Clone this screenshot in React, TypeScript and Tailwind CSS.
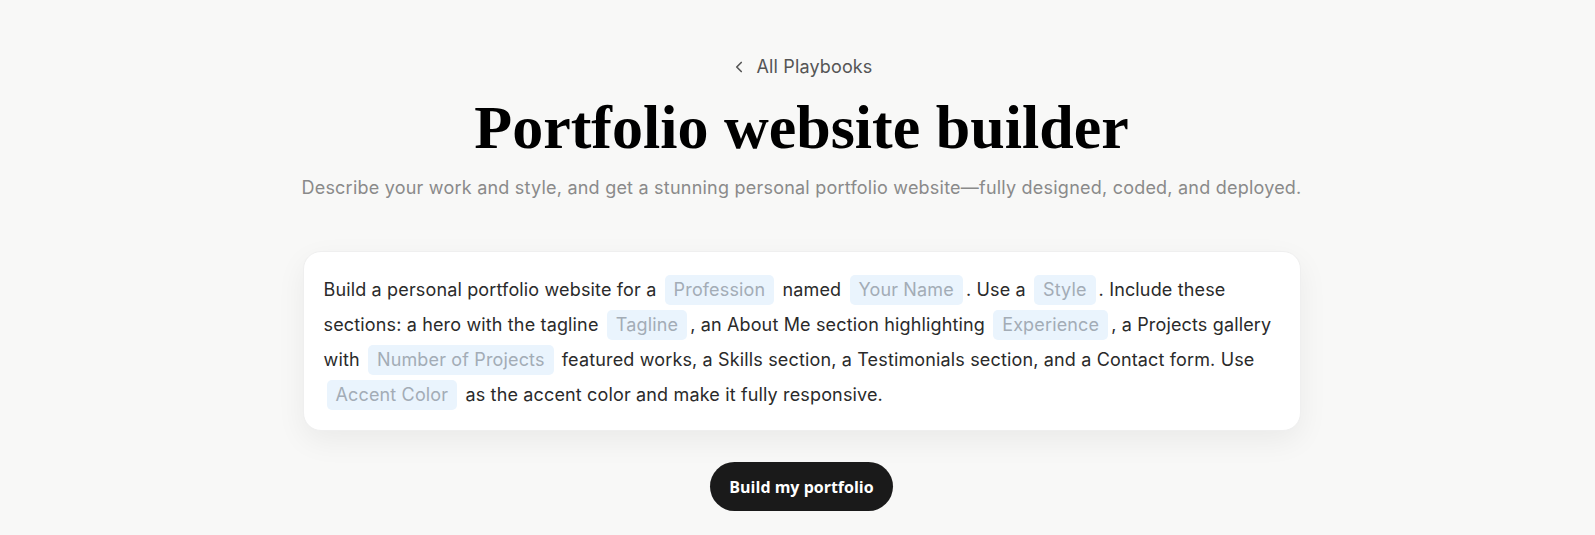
import { ChevronLeft } from 'lucide-react';

const sans = { fontFamily: 'Inter, "Noto Sans", sans-serif' };

function Chip({ label }: { label: string }) {
  return (
    <span className="mx-[3px] inline-block rounded-[5px] bg-[#eaf4fd] px-[9px] leading-[30px] text-[#a3acb6]">
      {label}
    </span>
  );
}

export default function App() {
  return (
    <div className="min-h-[535px] bg-[#f8f8f7] pl-[8px]" style={sans}>
      <div className="mx-auto flex w-[998px] flex-col items-center pt-[55px]">
        <a className="flex items-center gap-[8px] text-[18px] leading-[24px] tracking-[0.15px] text-[#555555]" href="#">
          <ChevronLeft className="h-[18px] w-[18px]" strokeWidth={2.2} />
          <span>All Playbooks</span>
        </a>
        <h1
          className="mt-[16px] text-[62px] font-bold leading-[64px] text-black"
          style={{ fontFamily: '"Liberation Serif", "DejaVu Serif", serif' }}
        >
          Portfolio website builder
        </h1>
        <p className="mt-[16px] whitespace-nowrap text-[18px] leading-[26px] tracking-[0.22px] text-[#8a8a8a]">
          Describe your work and style, and get a stunning personal portfolio website—fully designed, coded, and deployed.
        </p>
        <div className="mt-[50px] w-full rounded-[18px] border border-[#efefef] bg-white px-[20px] pb-[18px] pt-[20px] shadow-[0_10px_30px_rgba(0,0,0,0.06)]">
          <p className="text-[18px] leading-[35px] tracking-[0.15px] text-[#2a2a2a]">
            Build a personal portfolio website for a <Chip label="Profession" /> named <Chip label="Your Name" />. Use a{' '}
            <Chip label="Style" />. Include these sections: a hero with the tagline <Chip label="Tagline" />, an About Me
            section highlighting <Chip label="Experience" />, a Projects gallery with <Chip label="Number of Projects" />{' '}
            featured works, a Skills section, a Testimonials section, and a Contact form. Use <Chip label="Accent Color" />{' '}
            as the accent color and make it fully responsive.
          </p>
        </div>
        <button
          className="mt-[31px] h-[49px] w-[183px] rounded-full bg-[#1a1a1a] text-[16px] font-bold text-white"
          style={{ fontFamily: '"Open Sans", sans-serif' }}
          type="button"
        >
          Build my portfolio
        </button>
      </div>
    </div>
  );
}
